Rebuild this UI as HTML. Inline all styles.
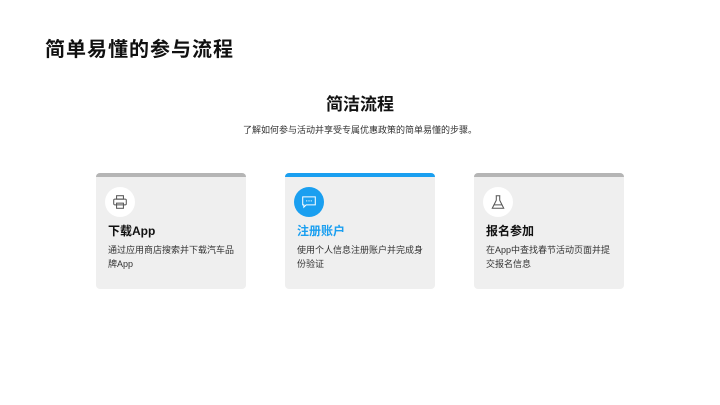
<!DOCTYPE html>
<html><head><meta charset="utf-8"><style>
*{margin:0;padding:0;box-sizing:border-box}
body{width:720px;height:405px;background:#fff;font-family:"Liberation Sans","Noto Sans CJK SC",sans-serif;position:relative;overflow:hidden;color:#111}
.h1{position:absolute;left:45px;top:33px;font-size:20px;font-weight:bold;letter-spacing:1px}
.h2{position:absolute;left:0;width:720px;top:90px;text-align:center;font-size:17px;font-weight:bold}
.sub{position:absolute;left:0;width:720px;top:123px;text-align:center;font-size:9px;color:#333}
.card{position:absolute;top:173px;width:150px;height:116px;background:#efefef;border-radius:4px;overflow:hidden}
.card .bar{height:4px;background:#b5b5b5}
.card.act .bar{background:#1a9ff0}
.ic{position:absolute;left:9px;top:14px;width:30px;height:30px;border-radius:50%;background:#fff;display:flex;align-items:center;justify-content:center}
.act .ic{background:#1a9ff0}
.t{position:absolute;left:12px;top:49px;font-size:12px;font-weight:bold}
.act .t{color:#1a9ff0}
.d{position:absolute;left:12px;top:70px;width:130px;font-size:9px;line-height:14px;color:#333}
</style></head><body>
<div class="h1">简单易懂的参与流程</div>
<div class="h2">简洁流程</div>
<div class="sub">了解如何参与活动并享受专属优惠政策的简单易懂的步骤。</div>
<div class="card" style="left:96px"><div class="bar"></div>
<div class="ic"><svg width="16" height="16" viewBox="0 0 14 14" fill="none" stroke="#555" stroke-width="0.9"><rect x="4" y="1.5" width="6" height="3"/><rect x="1.5" y="4.5" width="11" height="5" rx="1"/><rect x="4" y="8" width="6" height="4.5"/></svg></div>
<div class="t">下载App</div><div class="d">通过应用商店搜索并下载汽车品牌App</div></div>
<div class="card act" style="left:285px"><div class="bar"></div>
<div class="ic"><svg width="16" height="16" viewBox="0 0 14 14" fill="none" stroke="#fff" stroke-width="0.9"><path d="M1.5 2.5h11v7h-8l-2 2v-2h-1z"/><path d="M4.5 6h1M6.5 6h1M8.5 6h1"/></svg></div>
<div class="t">注册账户</div><div class="d">使用个人信息注册账户并完成身份验证</div></div>
<div class="card" style="left:474px"><div class="bar"></div>
<div class="ic"><svg width="16" height="16" viewBox="0 0 14 14" fill="none" stroke="#555" stroke-width="0.9"><path d="M5 1.5h4M5.5 1.5v4L2 12.5h10L8.5 5.5v-4"/><path d="M3.5 9.5h7"/></svg></div>
<div class="t">报名参加</div><div class="d">在App中查找春节活动页面并提交报名信息</div></div>
</body></html>
